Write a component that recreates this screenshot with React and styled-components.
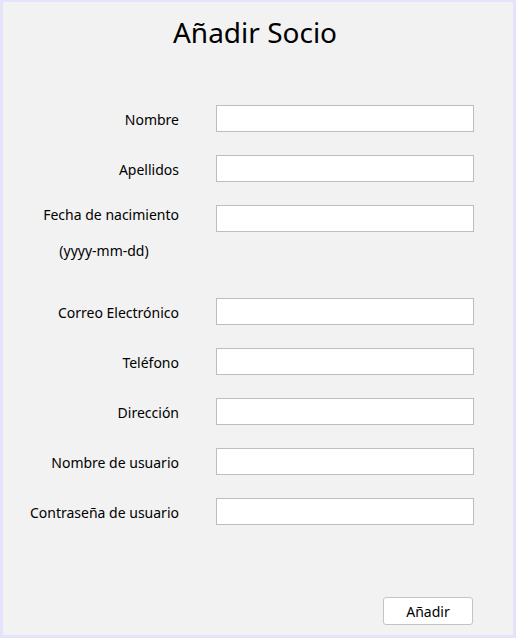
import React from 'react'
import styled, { createGlobalStyle } from 'styled-components'

const Global = createGlobalStyle`
    html, body {
        margin: 0;
        padding: 0;
        background: #e3e3fb;
    }
    * {
        box-sizing: border-box;
    }
`

const Frame = styled.div`
    width: 516px;
    height: 638px;
    border-style: solid;
    border-color: #e3e3fb;
    border-width: 2px 3px 3px 3px;
    background: #f2f2f2;
    display: flex;
    flex-direction: column;
    font-family: "Noto Sans", "Open Sans", sans-serif;
    color: #000;
`

const Title = styled.h1`
    margin: 0;
    padding: 12px 6px 0 0;
    height: 103px;
    text-align: center;
    font-weight: 400;
    font-size: 28px;
    line-height: 36px;
`

const Form = styled.div`
    display: flex;
    flex-direction: column;
    gap: 23px;
    padding-left: 16px;
    flex: 1;
`

const Row = styled.div`
    display: grid;
    grid-template-columns: 160px 258px;
    column-gap: 37px;
    align-items: ${p => (p.$top ? 'start' : 'center')};
    margin-bottom: ${p => p.$extra || 0}px;
`

const Label = styled.label`
    text-align: right;
    white-space: nowrap;
    font-size: 14px;
    line-height: 20px;
    padding-top: ${p => (p.$top ? 0 : 3)}px;
`

const Hint = styled.div`
    text-align: center;
    padding-top: 16px;
    margin-left: 10px;
`

const Field = styled.input`
    width: 258px;
    height: 27px;
    border: 1px solid #bdbdbd;
    background: #fff;
    margin: 0;
    padding: 2px 4px;
    font-family: inherit;
    font-size: 14px;
    outline: none;
`

const Footer = styled.div`
    display: flex;
    justify-content: flex-end;
    padding: 0 40px 10px 0;
`

const Button = styled.button`
    width: 90px;
    height: 28px;
    border: 1px solid #c4c4c4;
    border-radius: 3px;
    background: #fff;
    font-family: inherit;
    font-size: 14px;
    color: #000;
    padding: 0;
`

const fields = [
    'Nombre',
    'Apellidos',
    'Fecha de nacimiento',
    'Correo Electrónico',
    'Teléfono',
    'Dirección',
    'Nombre de usuario',
    'Contraseña de usuario',
]

const App = () => {
    return (
        <Frame>
            <Global />
            <Title>Añadir Socio</Title>
            <Form>
                {fields.map(name => {
                    const fecha = name === 'Fecha de nacimiento'
                    return (
                        <Row key={name} $top={fecha} $extra={fecha ? 14 : 0}>
                            <Label $top={fecha}>
                                {name}
                                {fecha && <Hint>(yyyy-mm-dd)</Hint>}
                            </Label>
                            <Field type="text" />
                        </Row>
                    )
                })}
            </Form>
            <Footer>
                <Button>Añadir</Button>
            </Footer>
        </Frame>
    )
}

export default App
